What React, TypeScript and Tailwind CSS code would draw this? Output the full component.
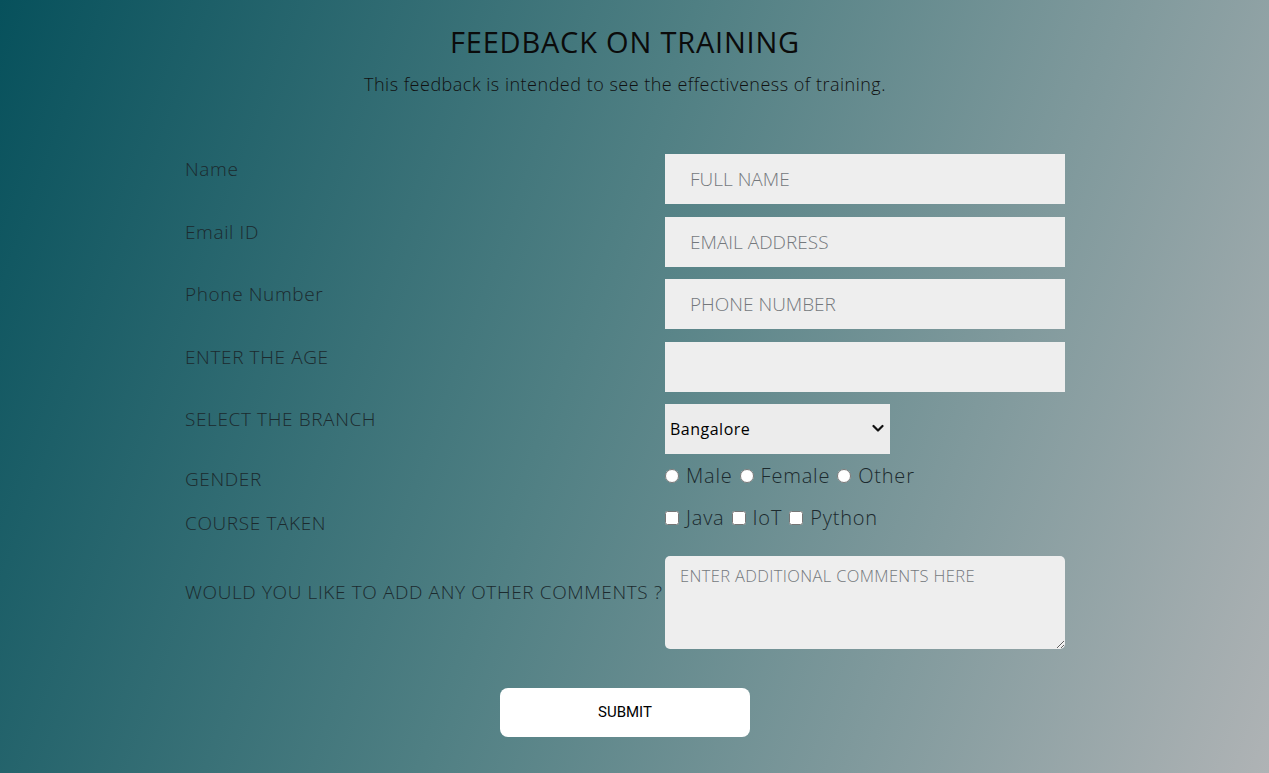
import React from 'react';

const labelCls = "text-[19px] leading-[30px] font-light tracking-[0.62px] text-[#1c2a2e] whitespace-nowrap";
const inputCls =
  "w-[400px] h-[50px] bg-[#eeeeee] px-[25px] text-[19px] font-light text-[#333] outline-none placeholder:text-[#74787c]";
const choiceCls = "flex items-center text-[20px] font-light tracking-[0.8px] text-[#1c2a2e]";
const boxCls = "m-0 w-[14px] h-[14px]";

const Row = ({ label, children, className = '' }: { label: string; children: React.ReactNode; className?: string }) => (
  <div className={`flex ${className}`}>
    <div className={`w-[480px] ${labelCls}`}>{label}</div>
    <div className="w-[400px]">{children}</div>
  </div>
);

export default function App() {
  return (
    <div className="min-h-screen w-full bg-[linear-gradient(110deg,#07515c_0%,#4f7f83_45%,#afb3b5_100%)] font-['Open_Sans',sans-serif] text-[#1c2a2e]">
      <div className="flex flex-col items-center pr-[19px]">
        <h1 className="mt-[24px] text-[29px] leading-[36px] font-normal tracking-[0.8px] text-[#0b0b0b]">FEEDBACK ON TRAINING</h1>
        <p className="mt-[12px] text-[18px] leading-[24px] font-light tracking-[0.5px] text-[#111]">
          This feedback is intended to see the effectiveness of training.
        </p>

        <form className="mt-[58px] w-[880px] flex flex-col" onSubmit={(e) => e.preventDefault()}>
          <div className="flex flex-col gap-y-[12.5px]">
            <Row label="Name">
              <input className={inputCls} placeholder="FULL NAME" />
            </Row>
            <Row label="Email ID">
              <input className={inputCls} placeholder="EMAIL ADDRESS" />
            </Row>
            <Row label="Phone Number">
              <input className={inputCls} placeholder="PHONE NUMBER" />
            </Row>
            <Row label="ENTER THE AGE">
              <input className={inputCls} />
            </Row>
            <Row label="SELECT THE BRANCH">
              <div className="relative w-[225px] h-[50px]">
                <select className="appearance-none w-full h-full bg-[#ececec] pl-[5px] pr-[24px] text-[16px] font-normal tracking-[0.5px] text-black outline-none">
                  <option>Bangalore</option>
                  <option>Chennai</option>
                  <option>Hyderabad</option>
                </select>
                <svg
                  className="pointer-events-none absolute right-[6px] top-[20px]"
                  width="12"
                  height="9"
                  viewBox="0 0 12 9"
                  fill="none"
                >
                  <path d="M1.5 2 L6 6.5 L10.5 2" stroke="#111" strokeWidth="2.2" strokeLinecap="round" strokeLinejoin="round" />
                </svg>
              </div>
            </Row>
          </div>

          <Row label="GENDER" className="mt-[10px] h-[44px]">
            <div className={`${choiceCls} h-[24px]`}>
              <input type="radio" name="gender" className={boxCls} />
              <span className="ml-[7px] mr-[7px]">Male</span>
              <input type="radio" name="gender" className={boxCls} />
              <span className="ml-[7px] mr-[7px]">Female</span>
              <input type="radio" name="gender" className={boxCls} />
              <span className="ml-[7px]">Other</span>
            </div>
          </Row>

          <Row label="COURSE TAKEN" className="h-[48px]">
            <div className={`${choiceCls} h-[20px]`}>
              <input type="checkbox" className={boxCls} />
              <span className="ml-[7px] mr-[7px]">Java</span>
              <input type="checkbox" className={boxCls} />
              <span className="ml-[7px] mr-[7px]">IoT</span>
              <input type="checkbox" className={boxCls} />
              <span className="ml-[7px]">Python</span>
            </div>
          </Row>

          <div className="flex">
            <div className={`w-[480px] pt-[21px] ${labelCls}`}>WOULD YOU LIKE TO ADD ANY OTHER COMMENTS ?</div>
            <textarea
              className="w-[400px] h-[93px] rounded-[5px] bg-[#eeeeee] px-[15px] py-[8px] text-[16.5px] font-light tracking-[0.35px] outline-none placeholder:text-[#74787c]"
              placeholder="ENTER ADDITIONAL COMMENTS HERE"
            />
          </div>

          <div className="mt-[39px] flex justify-center">
            <button
              type="submit"
              className="w-[250px] h-[49px] rounded-[8px] bg-white font-['Roboto',sans-serif] text-[15px] font-normal text-black"
            >
              SUBMIT
            </button>
          </div>
        </form>
      </div>
    </div>
  );
}
